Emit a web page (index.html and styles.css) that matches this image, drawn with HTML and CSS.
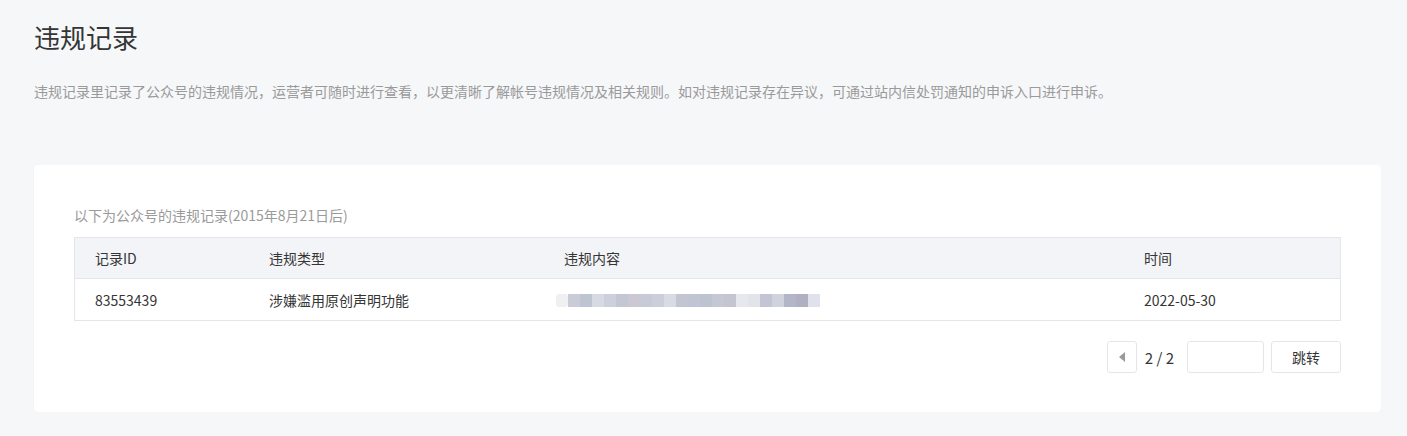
FILE: index.html
```html
<!DOCTYPE html>
<html lang="zh-CN">
<head>
<meta charset="utf-8">
<title>违规记录</title>
<link rel="stylesheet" href="styles.css">
</head>
<body>
<div class="page">
  <h1 class="title">违规记录</h1>
  <p class="desc">违规记录里记录了公众号的违规情况，运营者可随时进行查看，以更清晰了解帐号违规情况及相关规则。如对违规记录存在异议，可通过站内信处罚通知的申诉入口进行申诉。</p>
  <div class="card">
    <div class="subtitle">以下为公众号的违规记录(2015年8月21日后)</div>
    <div class="table">
      <div class="row head">
        <div class="cell c1">记录ID</div>
        <div class="cell c2">违规类型</div>
        <div class="cell c3">违规内容</div>
        <div class="cell c4">时间</div>
      </div>
      <div class="row">
        <div class="cell c1">83553439</div>
        <div class="cell c2">涉嫌滥用原创声明功能</div>
        <div class="cell c3 blurcell">
          <svg class="blur" width="264" height="13" viewBox="0 0 264 13">
            <rect x="0" y="0" width="12" height="13" rx="3" fill="#f0f0f3"/>
            <rect x="12" y="0" width="12" height="13" fill="#c9cbd9"/>
            <rect x="24" y="0" width="12" height="13" fill="#bfc4d3"/>
            <rect x="36" y="0" width="12" height="13" fill="#d7d9e3"/>
            <rect x="48" y="0" width="12" height="13" fill="#cdcfdc"/>
            <rect x="60" y="0" width="12" height="13" fill="#c2c6d5"/>
            <rect x="72" y="0" width="12" height="13" fill="#cbc8d4"/>
            <rect x="84" y="0" width="12" height="13" fill="#c8cad7"/>
            <rect x="96" y="0" width="12" height="13" fill="#cdcedb"/>
            <rect x="108" y="0" width="12" height="13" fill="#d8dae4"/>
            <rect x="120" y="0" width="12" height="13" fill="#c3c5d3"/>
            <rect x="132" y="0" width="12" height="13" fill="#c1c4d2"/>
            <rect x="144" y="0" width="12" height="13" fill="#bec3d1"/>
            <rect x="156" y="0" width="12" height="13" fill="#c5c8d4"/>
            <rect x="168" y="0" width="12" height="13" fill="#c5c5d1"/>
            <rect x="180" y="0" width="12" height="13" fill="#e6e8ed"/>
            <rect x="192" y="0" width="12" height="13" fill="#e3e4ea"/>
            <rect x="204" y="0" width="12" height="13" fill="#c3c5d5"/>
            <rect x="216" y="0" width="12" height="13" fill="#d0d2dd"/>
            <rect x="228" y="0" width="12" height="13" fill="#b3b5c8"/>
            <rect x="240" y="0" width="12" height="13" fill="#b0b0c2"/>
            <rect x="252" y="0" width="12" height="13" fill="#dfe2ec"/>
          </svg>
        </div>
        <div class="cell c4">2022-05-30</div>
      </div>
    </div>
    <div class="pager">
      <button class="prev" type="button" aria-label="上一页">
        <svg width="6" height="10" viewBox="0 0 6 10"><path d="M6 0 L0 5 L6 10 Z" fill="#9a9a9a"/></svg>
      </button>
      <span class="pagenum">2 / 2</span>
      <input class="goto" type="text">
      <button class="jump" type="button">跳转</button>
    </div>
  </div>
</div>
</body>
</html>
```

FILE: styles.css
```css
* { box-sizing: border-box; }
html, body {
  margin: 0;
  padding: 0;
  background: #f6f7f9;
  font-family: "Noto Sans CJK SC", "Liberation Sans", sans-serif;
  color: #353535;
}
.page {
  padding: 18px 26px 0 34px;
}
.title {
  margin: 0;
  font-size: 26px;
  font-weight: 400;
  line-height: 38px;
  color: #353535;
}
.desc {
  margin: 25px 0 0;
  font-size: 14px;
  line-height: 20px;
  color: #9a9a9a;
}
.card {
  margin-top: 64px;
  background: #fff;
  border-radius: 4px;
  box-shadow: 0 1px 2px rgba(0,0,0,0.04);
  padding: 40px 40px 39px;
}
.subtitle {
  font-size: 14px;
  line-height: 20px;
  color: #9a9a9a;
}
.table {
  margin-top: 12px;
  border: 1px solid #e4e6eb;
  font-size: 14px;
}
.row {
  display: grid;
  grid-template-columns: 174px 295px 580px 1fr;
  height: 41px;
  align-items: center;
}
.row.head {
  background: #f3f4f7;
  border-bottom: 1px solid #e4e6eb;
}
.cell {
  padding-left: 20px;
  line-height: 20px;
  color: #353535;
}
.cell.blurcell {
  padding-left: 12px;
  display: flex;
  align-items: center;
}
.blur { display: block; margin-top: 1px; }
.pager {
  margin-top: 20px;
  display: flex;
  justify-content: flex-end;
  align-items: center;
  height: 32px;
}
.prev {
  width: 30px;
  height: 32px;
  border: 1px solid #e4e6eb;
  border-radius: 3px;
  background: #fff;
  padding: 0;
  display: flex;
  align-items: center;
  justify-content: center;
}
.pagenum {
  margin: 0 13px 0 8px;
  font-size: 15px;
  color: #353535;
}
.goto {
  width: 77px;
  height: 32px;
  border: 1px solid #e4e6eb;
  border-radius: 3px;
  background: #fff;
  margin: 0;
  padding: 0 8px;
  font: inherit;
}
.jump {
  margin-left: 7px;
  width: 70px;
  height: 32px;
  border: 1px solid #e4e6eb;
  border-radius: 3px;
  background: #fff;
  font-family: inherit;
  font-size: 14px;
  color: #353535;
  padding: 0;
}
```
